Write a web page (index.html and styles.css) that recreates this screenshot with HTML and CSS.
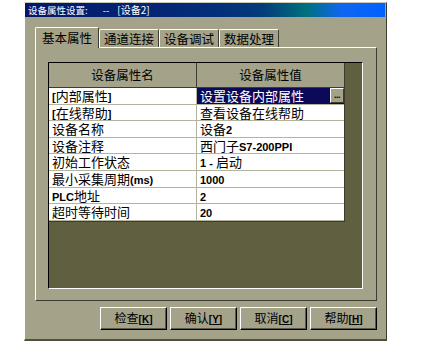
FILE: index.html
```html
<!DOCTYPE html>
<html>
<head>
<meta charset="utf-8">
<link rel="stylesheet" href="styles.css">
</head>
<body>
<div class="window">
  <div class="titlebar"><span>设备属性设置:</span><span class="t-dash">--</span><span class="t-dev">[设备2]</span></div>
  <div class="tabs">
    <div class="tab active">基本属性</div>
    <div class="tab">通道连接</div>
    <div class="tab">设备调试</div>
    <div class="tab">数据处理</div>
  </div>
  <div class="panel">
    <div class="grid">
      <div class="table">
        <div class="row head">
          <div class="cell name">设备属性名</div>
          <div class="cell val">设备属性值</div>
        </div>
        <div class="row">
          <div class="cell name"><span class="b">[</span>内部属性<span class="b">]</span></div>
          <div class="cell val sel"><span class="txt">设置设备内部属性</span><span class="dots">...</span></div>
        </div>
        <div class="row">
          <div class="cell name"><span class="b">[</span>在线帮助<span class="b">]</span></div>
          <div class="cell val">查看设备在线帮助</div>
        </div>
        <div class="row">
          <div class="cell name">设备名称</div>
          <div class="cell val">设备<span class="b">2</span></div>
        </div>
        <div class="row">
          <div class="cell name">设备注释</div>
          <div class="cell val">西门子<span class="b">S7-200PPI</span></div>
        </div>
        <div class="row">
          <div class="cell name">初始工作状态</div>
          <div class="cell val"><span class="b">1 -&nbsp;</span>启动</div>
        </div>
        <div class="row">
          <div class="cell name">最小采集周期<span class="b">(ms)</span></div>
          <div class="cell val"><span class="b">1000</span></div>
        </div>
        <div class="row">
          <div class="cell name"><span class="b">PLC</span>地址</div>
          <div class="cell val"><span class="b">2</span></div>
        </div>
        <div class="row">
          <div class="cell name">超时等待时间</div>
          <div class="cell val"><span class="b">20</span></div>
        </div>
      </div>
    </div>
  </div>
  <div class="buttons">
    <div class="btn">检查<span class="b">[<u>K</u>]</span></div>
    <div class="btn">确认<span class="b">[<u>Y</u>]</span></div>
    <div class="btn">取消<span class="b">[<u>C</u>]</span></div>
    <div class="btn">帮助<span class="b">[<u>H</u>]</span></div>
  </div>
</div>
</body>
</html>
```
FILE: styles.css
```css
html, body {
  margin: 0;
  padding: 0;
  background: #ffffff;
}
body {
  font-family: "Noto Sans CJK SC", "Liberation Sans", sans-serif;
  font-size: 13px;
  color: #000;
}
.window {
  margin: 2px 0 0 24px;
  width: 363px;
  height: 339px;
  box-sizing: border-box;
  background: #a4a38a;
  border-left: 1px solid #ffffff;
  border-top: 1px solid #c8c8b4;
  border-right: 1px solid #3c3c30;
  border-bottom: 2px solid #505040;
  display: flex;
  flex-direction: column;
}
.titlebar {
  height: 14px;
  line-height: 14px;
  margin: 0 1px 0 0;
  padding-left: 3px;
  font-size: 9.5px;
  color: #ffffff;
  background: linear-gradient(to right, #04166a 0%, #03307a 55%, #033c7a 66%, #00707e 78%, #1066f0 88%, #0062ff 100%);
  white-space: nowrap;
  display: flex;
}
.t-dash {
  margin-left: 15px;
}
.t-dev {
  margin-left: 8px;
  font-size: 10px;
}
.tabs {
  display: flex;
  align-items: flex-end;
  margin-top: 10px;
  padding-left: 10px;
  height: 20px;
  position: relative;
  z-index: 1;
}
.tab {
  height: 18px;
  box-sizing: border-box;
  line-height: 17px;
  font-size: 12.5px;
  padding: 0 4px;
  border-left: 1px solid #ffffff;
  border-top: 1px solid #ffffff;
  border-right: 1px solid #3c3c30;
  border-top-left-radius: 2px;
  border-top-right-radius: 2px;
  white-space: nowrap;
}
.tab.active {
  height: 21px;
  margin-bottom: -1px;
  padding: 0 6px;
  background: #a4a38a;
  line-height: 20px;
}
.panel {
  margin-left: 10px;
  width: 342px;
  height: 254px;
  box-sizing: border-box;
  border-left: 1px solid #ffffff;
  border-top: 1px solid #ffffff;
  border-right: 1px solid #3c3c30;
  border-bottom: 1px solid #3c3c30;
  padding: 14px 13px 11px 12px;
}
.grid {
  height: 100%;
  box-sizing: border-box;
  background: #605f40;
  border-left: 1px solid #000000;
  border-top: 1px solid #000000;
  border-right: 1px solid #ffffff;
  border-bottom: 1px solid #ffffff;
}
.table {
  width: 296px;
  border-right: 1px solid #3c3c30;
  border-bottom: 1px solid #3c3c30;
  box-sizing: border-box;
}
.row {
  display: flex;
  height: 16.6px;
  box-sizing: border-box;
  border-bottom: 1px solid #b4b39c;
  background: #ffffff;
}
.row.head {
  height: 25px;
  background: #a4a38a;
  border-bottom: 1px solid #3c3c30;
}
.cell {
  box-sizing: border-box;
  white-space: nowrap;
  line-height: 15px;
  height: 15.6px;
  padding-left: 3px;
}
.cell.name {
  width: 148px;
  border-right: 1px solid #b4b39c;
}
.cell.val {
  flex: 1;
}
.head .cell {
  height: 24px;
  line-height: 24px;
  text-align: center;
  padding-left: 0;
  font-size: 12.5px;
}
.head .cell.name {
  border-right: 1px solid #3c3c30;
}
.cell.sel {
  background: #0a0a58;
  color: #ffffff;
  display: flex;
  justify-content: space-between;
  align-items: center;
  padding-right: 0;
}
.dots {
  width: 14px;
  height: 15px;
  box-sizing: border-box;
  background: #a4a38a;
  color: #000;
  border-left: 1px solid #ffffff;
  border-top: 1px solid #ffffff;
  border-right: 1px solid #3c3c30;
  border-bottom: 1px solid #3c3c30;
  font-family: "Liberation Sans", sans-serif;
  font-weight: bold;
  font-size: 9px;
  line-height: 12px;
  text-align: center;
  letter-spacing: -0.5px;
}
.b {
  font-family: "Liberation Sans", sans-serif;
  font-weight: bold;
  font-size: 11px;
  line-height: 1;
}
.buttons {
  display: flex;
  justify-content: flex-end;
  gap: 3px;
  margin-top: 6px;
  padding-right: 9px;
}
.btn {
  width: 67px;
  height: 23px;
  box-sizing: border-box;
  border-left: 1px solid #ffffff;
  border-top: 1px solid #ffffff;
  border-right: 1px solid #000000;
  border-bottom: 1px solid #000000;
  box-shadow: inset -1px -1px 0 #5a5a48;
  text-align: center;
  line-height: 20px;
  font-size: 12px;
}
.btn .b {
  font-size: 10px;
}
```
